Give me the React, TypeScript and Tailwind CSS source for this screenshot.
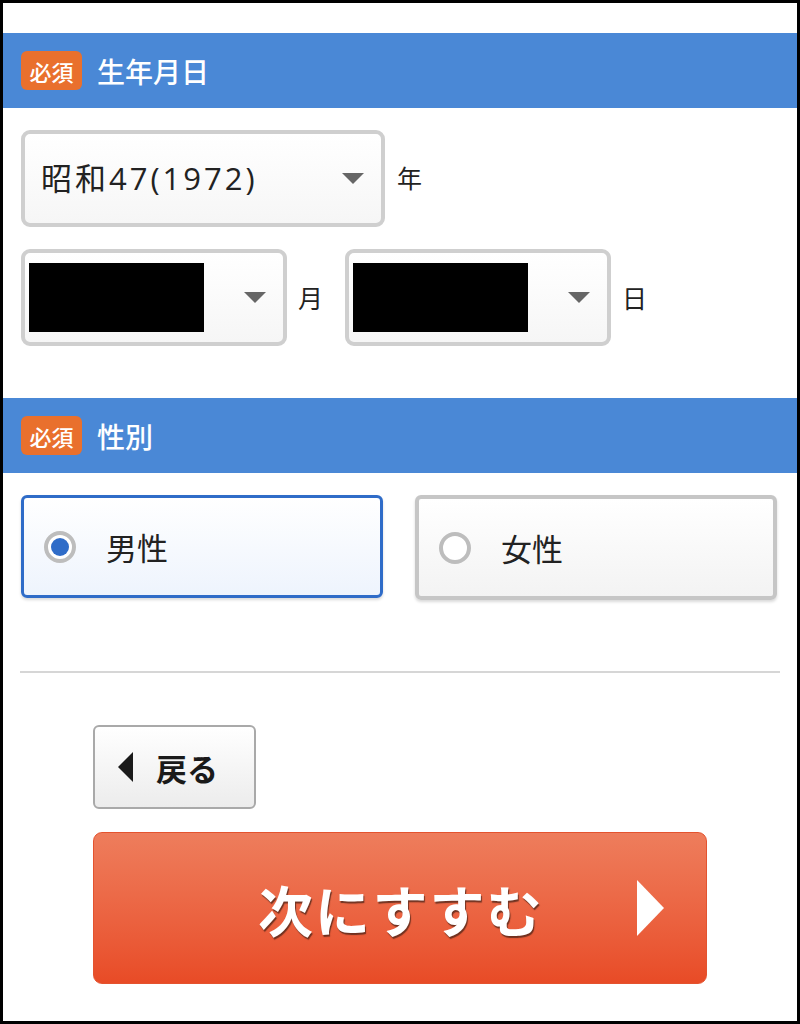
import React from "react";

const FONT = { fontFamily: '"Noto Sans CJK JP", "Noto Sans", sans-serif' };

const SectionHeader = ({ title }: { title: string }) => (
  <div className="h-[75px] bg-[#4a88d6] flex items-center px-[18px]">
    <span className="w-[61px] h-[39px] rounded-[6px] bg-[#e9702d] text-white text-[22px] font-medium flex items-center justify-center leading-none">
      必須
    </span>
    <span className="ml-[15px] text-white text-[28px] font-medium leading-none">
      {title}
    </span>
  </div>
);

const Caret = () => (
  <svg width="22" height="11" viewBox="0 0 22 11" className="shrink-0">
    <polygon points="0,0 22,0 11,11" fill="#666666" />
  </svg>
);

const SelectBox = ({
  width,
  children,
}: {
  width: string;
  children: React.ReactNode;
}) => (
  <div
    className={`${width} h-[97px] rounded-[9px] border-[4px] border-[#cfcfcf] bg-gradient-to-b from-white to-[#f6f6f6] flex items-center pl-[4px] pr-[17px] shrink-0`}
  >
    <div className="flex-1 flex items-center">{children}</div>
    <Caret />
  </div>
);

const Redacted = () => <div className="w-[175px] h-[69px] bg-black" />;

const RadioCard = ({ label, checked }: { label: string; checked: boolean }) => (
  <div
    className={
      checked
        ? "w-[362px] h-[103px] rounded-[6px] border-[3px] border-[#2f6cc8] bg-gradient-to-b from-white to-[#eef4fd] flex items-center pl-[20px] shadow-[0_2px_3px_rgba(0,0,0,0.15)]"
        : "w-[362px] h-[105px] rounded-[6px] border-[4px] border-[#c6c6c6] bg-gradient-to-b from-white to-[#f3f3f3] flex items-center pl-[20px] shadow-[0_2px_3px_rgba(0,0,0,0.15)]"
    }
  >
    <span className="w-[32px] h-[32px] rounded-full border-[4px] border-[#bdbdbd] bg-white flex items-center justify-center shrink-0">
      {checked && <span className="w-[18px] h-[18px] rounded-full bg-[#2f6cc8]" />}
    </span>
    <span className="ml-[30px] text-[31px] text-[#222] leading-none">{label}</span>
  </div>
);

export default function App() {
  return (
    <div
      className="w-[800px] h-[1024px] border-[3px] border-black bg-white overflow-hidden"
      style={FONT}
    >
      <div className="h-[30px]" />
      <SectionHeader title="生年月日" />

      <div className="px-[18px] pt-[22px] pb-[52px]">
        <div className="flex items-center">
          <SelectBox width="w-[364px]">
            <span
              className="ml-[12px] text-[31px] text-[#222] leading-none tracking-[3px]"
              style={{ fontFamily: '"Open Sans", "Noto Sans CJK JP", sans-serif' }}
            >
              昭和47(1972)
            </span>
          </SelectBox>
          <span className="ml-[12px] text-[25px] text-[#222] leading-none -mt-[2px]">
            年
          </span>
        </div>
        <div className="flex items-center mt-[22px]">
          <SelectBox width="w-[266px]">
            <Redacted />
          </SelectBox>
          <span className="ml-[11px] text-[25px] text-[#222] leading-none">月</span>
          <div className="ml-[22px]">
            <SelectBox width="w-[266px]">
              <Redacted />
            </SelectBox>
          </div>
          <span className="ml-[11px] text-[25px] text-[#222] leading-none">日</span>
        </div>
      </div>

      <SectionHeader title="性別" />

      <div className="px-[18px] pt-[22px] flex gap-[32px]">
        <RadioCard label="男性" checked />
        <RadioCard label="女性" checked={false} />
      </div>

      <div className="mx-[17px] mt-[71px] h-[2px] bg-[#d6d6d6]" />

      <div className="pl-[90px] pt-[52px]">
        <div className="w-[163px] h-[84px] rounded-[6px] border-[2px] border-[#a9a9a9] bg-gradient-to-b from-white to-[#ececec] flex items-center pl-[23px]">
          <svg width="15" height="30" viewBox="0 0 15 30">
            <polygon points="15,0 15,30 0,15" fill="#1a1a1a" />
          </svg>
          <span className="ml-[23px] text-[31px] font-bold text-[#1a1a1a] leading-none">
            戻る
          </span>
        </div>

        <div className="mt-[23px] w-[614px] h-[152px] rounded-[9px] border border-[#e4532f] bg-gradient-to-b from-[#ee7d5c] to-[#e84b26] flex items-center pl-[164px] pr-[42px]">
          <span className="text-[55px] font-bold text-white leading-none tracking-[2px] [text-shadow:1px_2px_1px_rgba(60,30,20,0.7)]">
            次にすすむ
          </span>
          <div className="flex-1" />
          <svg width="27" height="56" viewBox="0 0 27 56">
            <polygon points="0,0 27,28 0,56" fill="#ffffff" />
          </svg>
        </div>
      </div>
    </div>
  );
}
